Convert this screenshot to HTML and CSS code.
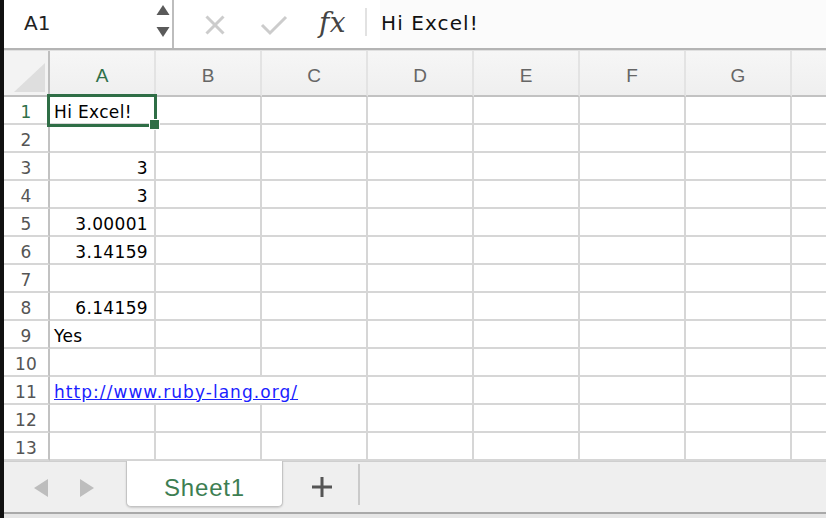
FILE: index.html
```html
<!DOCTYPE html>
<html>
<head>
<meta charset="utf-8">
<link rel="stylesheet" href="styles.css">
</head>
<body>
<div class="app">
  <div class="formula-bar">
    <div class="namebox">
      <span class="namebox-text">A1</span>
      <svg class="spinner" width="14" height="34" viewBox="0 0 14 34">
        <polygon points="7,1 13.5,11 0.5,11" fill="#5a5a5a"/>
        <polygon points="0.5,23 13.5,23 7,33" fill="#5a5a5a"/>
      </svg>
    </div>
    <div class="nb-divider"></div>
    <div class="tools">
      <svg class="icon-x" width="22" height="22" viewBox="0 0 22 22">
        <line x1="2.5" y1="2.5" x2="19.5" y2="19.5" stroke="#cccccc" stroke-width="3"/>
        <line x1="19.5" y1="2.5" x2="2.5" y2="19.5" stroke="#cccccc" stroke-width="3"/>
      </svg>
      <svg class="icon-check" width="28" height="22" viewBox="0 0 28 22">
        <polyline points="2,11 10,19 26,3" fill="none" stroke="#cccccc" stroke-width="3"/>
      </svg>
      <span class="fx">fx</span>
      <div class="fx-divider"></div>
    </div>
    <div class="formula-field">Hi Excel!</div>
  </div>

  <div class="sheet">
    <div class="corner"><svg width="31" height="29" viewBox="0 0 31 29"><polygon points="31,0 31,29 0,29" fill="#dedede"/></svg></div>
    <div class="colhead active">A</div>
    <div class="colhead">B</div>
    <div class="colhead">C</div>
    <div class="colhead">D</div>
    <div class="colhead">E</div>
    <div class="colhead">F</div>
    <div class="colhead">G</div>
    <div class="colhead last"></div>

    <div class="rowhead active">1</div>
    <div class="cell sel">Hi Excel!<div class="selection"></div><div class="handle"></div></div>
    <div class="cell"></div><div class="cell"></div><div class="cell"></div><div class="cell"></div><div class="cell"></div><div class="cell"></div><div class="cell last"></div>

    <div class="rowhead">2</div>
    <div class="cell"></div><div class="cell"></div><div class="cell"></div><div class="cell"></div><div class="cell"></div><div class="cell"></div><div class="cell"></div><div class="cell last"></div>

    <div class="rowhead">3</div>
    <div class="cell num">3</div><div class="cell"></div><div class="cell"></div><div class="cell"></div><div class="cell"></div><div class="cell"></div><div class="cell"></div><div class="cell last"></div>

    <div class="rowhead">4</div>
    <div class="cell num">3</div><div class="cell"></div><div class="cell"></div><div class="cell"></div><div class="cell"></div><div class="cell"></div><div class="cell"></div><div class="cell last"></div>

    <div class="rowhead">5</div>
    <div class="cell num">3.00001</div><div class="cell"></div><div class="cell"></div><div class="cell"></div><div class="cell"></div><div class="cell"></div><div class="cell"></div><div class="cell last"></div>

    <div class="rowhead">6</div>
    <div class="cell num">3.14159</div><div class="cell"></div><div class="cell"></div><div class="cell"></div><div class="cell"></div><div class="cell"></div><div class="cell"></div><div class="cell last"></div>

    <div class="rowhead">7</div>
    <div class="cell"></div><div class="cell"></div><div class="cell"></div><div class="cell"></div><div class="cell"></div><div class="cell"></div><div class="cell"></div><div class="cell last"></div>

    <div class="rowhead">8</div>
    <div class="cell num">6.14159</div><div class="cell"></div><div class="cell"></div><div class="cell"></div><div class="cell"></div><div class="cell"></div><div class="cell"></div><div class="cell last"></div>

    <div class="rowhead">9</div>
    <div class="cell">Yes</div><div class="cell"></div><div class="cell"></div><div class="cell"></div><div class="cell"></div><div class="cell"></div><div class="cell"></div><div class="cell last"></div>

    <div class="rowhead">10</div>
    <div class="cell"></div><div class="cell"></div><div class="cell"></div><div class="cell"></div><div class="cell"></div><div class="cell"></div><div class="cell"></div><div class="cell last"></div>

    <div class="rowhead">11</div>
    <div class="cell span3"><a class="link" href="#">http://www.ruby-lang.org/</a></div><div class="cell"></div><div class="cell"></div><div class="cell"></div><div class="cell"></div><div class="cell last"></div>

    <div class="rowhead">12</div>
    <div class="cell"></div><div class="cell"></div><div class="cell"></div><div class="cell"></div><div class="cell"></div><div class="cell"></div><div class="cell"></div><div class="cell last"></div>

    <div class="rowhead">13</div>
    <div class="cell"></div><div class="cell"></div><div class="cell"></div><div class="cell"></div><div class="cell"></div><div class="cell"></div><div class="cell"></div><div class="cell last"></div>
  </div>

  <div class="tabbar">
    <div class="nav">
      <svg width="14" height="18" viewBox="0 0 14 18"><polygon points="14,0 14,18 0,9" fill="#bdbdbd"/></svg>
      <svg width="14" height="18" viewBox="0 0 14 18"><polygon points="0,0 0,18 14,9" fill="#bdbdbd"/></svg>
    </div>
    <div class="tab">Sheet1</div>
    <svg class="plus" width="20" height="20" viewBox="0 0 20 20">
      <rect x="0" y="8.5" width="20" height="3" fill="#555"/>
      <rect x="8.5" y="0" width="3" height="20" fill="#555"/>
    </svg>
    <div class="tab-divider"></div>
  </div>
  <div class="footer-line"></div>
</div>
</body>
</html>
```

FILE: styles.css
```css
* { box-sizing: border-box; }
html, body { margin: 0; padding: 0; }
body {
  background: #111;
  width: 826px;
  height: 518px;
  overflow: hidden;
  font-family: "DejaVu Sans", sans-serif;
}
.app {
  margin-left: 4px;
  width: 822px;
  height: 518px;
  background: #fff;
  display: flex;
  flex-direction: column;
}

/* formula bar */
.formula-bar {
  height: 50px;
  flex: none;
  display: flex;
  background: #fff;
  border-bottom: 2px solid #b4b4b4;
}
.namebox {
  width: 168px;
  display: flex;
  align-items: flex-start;
  padding-left: 20px;
  padding-right: 2px;
}
.namebox-text {
  font-size: 20px;
  color: #222;
  line-height: 20px;
  margin-top: 13px;
}
.spinner { margin-left: auto; margin-top: 4px; }
.nb-divider {
  width: 2px;
  background: #bdbdbd;
}
.tools {
  width: 206px;
  display: flex;
  align-items: flex-start;
}
.icon-x { margin-left: 30px; margin-top: 14px; }
.icon-check { margin-left: 34px; margin-top: 14px; }
.fx {
  margin-left: 31px;
  margin-top: 7px;
  font-family: "DejaVu Serif", serif;
  font-style: italic;
  font-size: 28px;
  line-height: 32px;
  color: #444;
  letter-spacing: 0.5px;
}
.fx-divider {
  width: 2px;
  height: 28px;
  margin-top: 8px;
  margin-left: auto;
  margin-right: 13px;
  background: #e2e2e2;
}
.formula-field {
  flex: 1;
  background: #fbfbfb;
  padding-left: 1px;
  padding-top: 13px;
  font-size: 20px;
  line-height: 20px;
  letter-spacing: 1.1px;
  color: #111;
}

/* sheet grid */
.sheet {
  flex: none;
  height: 411px;
  border-top: 1px solid #e0e0e0;
  display: grid;
  grid-template-columns: 46px repeat(7, 106px) 1fr;
  grid-template-rows: 46px repeat(13, 28px);
}
.corner {
  background: #f3f3f3;
  border-right: 2px solid #bfbfbf;
  border-bottom: 2px solid #bfbfbf;
  display: flex;
  align-items: flex-end;
  justify-content: flex-end;
  padding: 0 3px 3px 0;
}
.colhead {
  background: linear-gradient(#f6f6f6, #efefef);
  border-right: 2px solid #e3e3e3;
  border-bottom: 2px solid #c2c2c2;
  display: flex;
  align-items: center;
  justify-content: center;
  font-family: "Liberation Sans", sans-serif;
  font-size: 19px;
  color: #666;
  padding-top: 6px;
}
.colhead.active { color: #2f7049; }
.colhead.last { border-right: none; }
.rowhead {
  background: #fff;
  border-right: 2px solid #c2c2c2;
  border-bottom: 2px solid #d6d6d6;
  display: flex;
  align-items: center;
  justify-content: center;
  font-size: 17px;
  color: #555;
  letter-spacing: 0.3px;
  padding-top: 3px;
}
.rowhead.active { color: #2f7049; }
.cell {
  border-right: 2px solid #d6d6d6;
  border-bottom: 2px solid #d6d6d6;
  font-size: 17px;
  letter-spacing: 0.35px;
  color: #000;
  padding: 3px 6px 0 4px;
  display: flex;
  align-items: center;
  white-space: nowrap;
}
.cell.last { border-right: none; }
.cell.num { justify-content: flex-end; }
.cell.span3 { grid-column: span 3; }
.cell.sel { position: relative; }
.link {
  color: #1a22ff;
  text-decoration: underline;
  letter-spacing: 1.05px;
}
.selection {
  position: absolute;
  left: -3px;
  top: -3px;
  width: 110px;
  height: 33px;
  border: 3px solid #2f6e46;
}
.handle {
  position: absolute;
  left: 100px;
  top: 23px;
  width: 9px;
  height: 9px;
  background: #2f6e46;
  outline: 1px solid #fff;
}

/* tab bar */
.tabbar {
  flex: none;
  height: 53px;
  background: #efefef;
  border-top: 1px solid #cfcfcf;
  border-bottom: 2px solid #a9a9a9;
  display: flex;
  align-items: flex-start;
}
.nav {
  display: flex;
  gap: 32px;
  padding-left: 30px;
  margin-top: 17px;
}
.tab {
  margin-left: 32px;
  margin-top: -1px;
  width: 157px;
  height: 46px;
  background: #fff;
  border: 1px solid #c4c4c4;
  border-top: none;
  border-radius: 0 0 5px 5px;
  box-shadow: 0 1px 2px rgba(0,0,0,0.15);
  display: flex;
  justify-content: center;
  align-items: center;
  padding-top: 8px;
  font-family: "Liberation Sans", sans-serif;
  font-size: 24px;
  letter-spacing: 0.8px;
  color: #3d7e52;
}
.plus { margin-left: 29px; margin-top: 15px; }
.tab-divider {
  width: 2px;
  height: 41px;
  margin-top: 2px;
  margin-left: 26px;
  background: #cacaca;
}
.footer-line {
  flex: 1;
  background: #e6e6e6;
}
```
